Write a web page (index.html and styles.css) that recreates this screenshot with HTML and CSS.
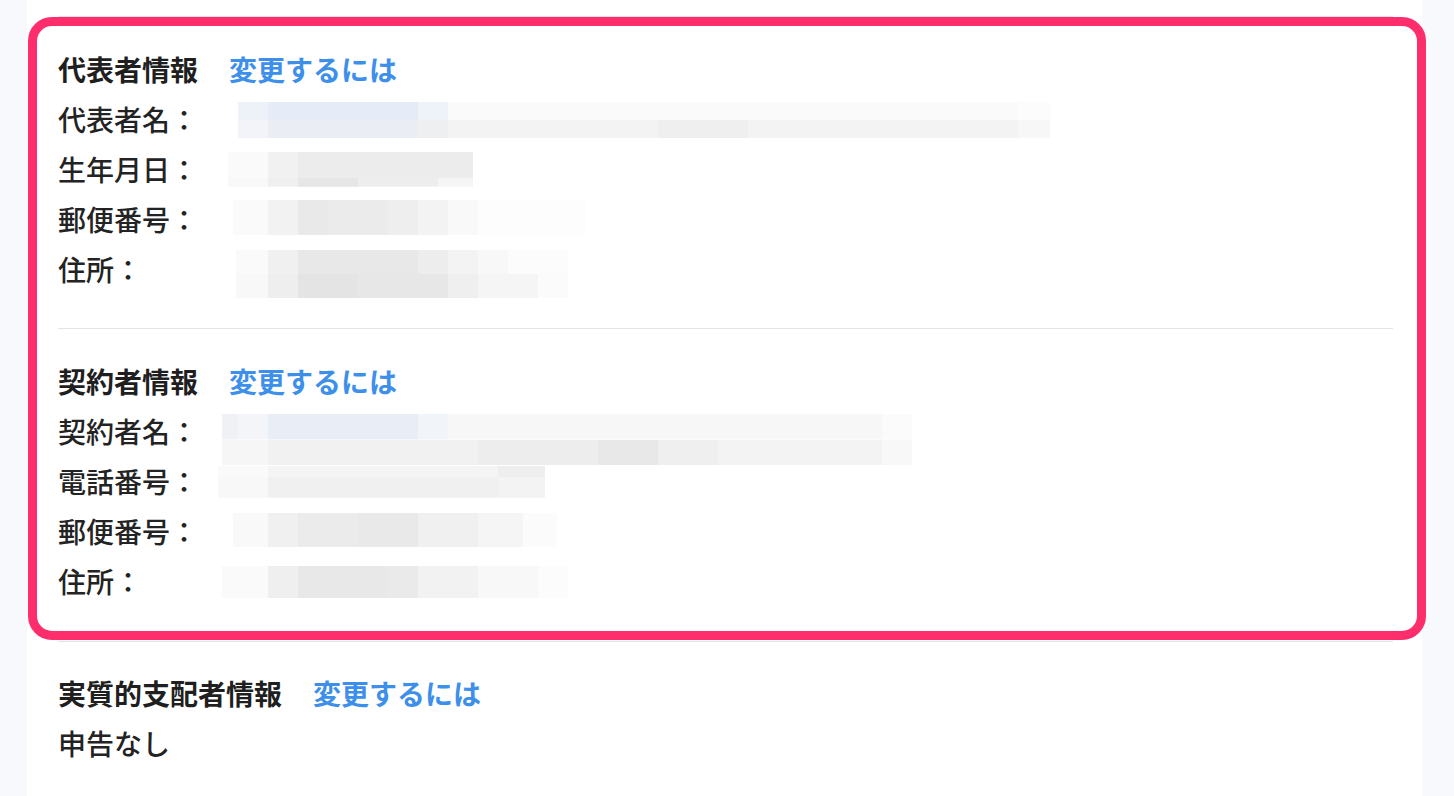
FILE: index.html
```html
<!DOCTYPE html>
<html lang="ja">
<head>
<meta charset="utf-8">
<title>登録情報</title>
<link rel="stylesheet" href="styles.css">
</head>
<body>
<div class="panel">
  <div class="divider top-divider"></div>
  <div class="highlight">
    <section class="info">
      <div class="heading"><span class="title">代表者情報</span><a class="link" href="#">変更するには</a></div>
      <div class="row"><span class="label">代表者名：</span><div class="mosaic m1"></div></div>
      <div class="row"><span class="label">生年月日：</span><div class="mosaic m2"></div></div>
      <div class="row"><span class="label">郵便番号：</span><div class="mosaic m3"></div></div>
      <div class="row"><span class="label">住所：</span><div class="mosaic m4"></div></div>
    </section>
    <div class="divider inner-divider"></div>
    <section class="info">
      <div class="heading"><span class="title">契約者情報</span><a class="link" href="#">変更するには</a></div>
      <div class="row"><span class="label">契約者名：</span><div class="mosaic m5"></div></div>
      <div class="row"><span class="label">電話番号：</span><div class="mosaic m6"></div></div>
      <div class="row"><span class="label">郵便番号：</span><div class="mosaic m7"></div></div>
      <div class="row"><span class="label">住所：</span><div class="mosaic m8"></div></div>
    </section>
  </div>
  <div class="divider bottom-divider"></div>
  <section class="info outside">
    <div class="heading"><span class="title">実質的支配者情報</span><a class="link" href="#">変更するには</a></div>
    <div class="plain">申告なし</div>
  </section>
</div>
</body>
</html>
```
FILE: styles.css
```css
html, body {
  margin: 0;
  padding: 0;
}
body {
  background: #f8f9fd;
  font-family: "Noto Sans CJK JP", "Noto Sans", sans-serif;
  color: #262626;
  font-size: 28px;
  line-height: 50px;
}
.panel {
  margin-left: 27px;
  width: 1395px;
  min-height: 796px;
  background: #ffffff;
  padding-top: 16px;
  box-sizing: border-box;
}
.divider {
  height: 1px;
  background: #e4e4e4;
}
.top-divider {
  margin: 0 29px 0 31px;
}
.highlight {
  margin-left: 1px;
  width: 1398px;
  box-sizing: border-box;
  border: 9px solid #fe2d6c;
  border-radius: 24px;
  padding: 18px 24px 25px 21px;
  background: #ffffff;
}
.inner-divider {
  margin: 34px 0 27px 0;
}
.bottom-divider {
  margin: 1px 29px 0 31px;
}
.heading {
  display: flex;
  align-items: center;
  height: 50px;
}
.title {
  font-weight: 700;
  color: #1f1f1f;
}
.link {
  margin-left: 31px;
  color: #3d8fe9;
  font-weight: 700;
  text-decoration: none;
}
.row {
  display: grid;
  grid-template-columns: 160px 1fr;
  height: 50px;
}
.label {
  color: #232323;
  font-weight: 500;
}
.mosaic {
  align-self: start;
  background-repeat: no-repeat;
}
.outside {
  padding: 26px 31px 0 31px;
}
.plain {
  color: #232323;
  font-weight: 500;
}

.m1 {
  margin: 8px 0 0 20px;
  width: 812px;
  height: 36px;
  background-image:
    linear-gradient(to right, #edf1f8 0 30px, #e5ecf8 30px 180px, #eef3fa 180px 210px, #fafafa 210px 780px, #fcfcfc 780px),
    linear-gradient(to right, #f2f4f9 0 30px, #eaedf4 30px 180px, #eeeff1 180px 210px, #f3f3f3 210px 420px, #efefef 420px 510px, #f3f3f3 510px 780px, #f7f7f7 780px);
  background-size: 100% 50%, 100% 50%;
  background-position: top, bottom;
}
.m2 {
  margin: 8px 0 0 10px;
  width: 245px;
  height: 35px;
  background-image:
    linear-gradient(to right, #fafafa 0 40px, #f1f1f1 40px 70px, #ececec 70px 245px),
    linear-gradient(to right, #f8f8f8 0 40px, #efefef 40px 70px, #e6e6e6 70px 130px, #ededed 130px 210px, #f5f5f5 210px);
  background-size: 100% 75%, 100% 25%;
  background-position: top, bottom;
}
.m3 {
  margin: 6px 0 0 15px;
  width: 352px;
  height: 35px;
  background-image:
    linear-gradient(to right, #fafafa 0 35px, #f2f2f2 35px 65px, #e9e9e9 65px 95px, #ebebeb 95px 155px, #eeeeee 155px 185px, #f3f3f3 185px 215px, #f9f9f9 215px 245px, #fdfdfd 245px);
}
.m4 {
  margin: 6px 0 0 18px;
  width: 332px;
  height: 48px;
  background-image:
    linear-gradient(to right, #fafafa 0 32px, #f0f0f0 32px 62px, #e8e8e8 62px 182px, #ededed 182px 212px, #f3f3f3 212px 242px, #f8f8f8 242px 272px, #fcfcfc 272px),
    linear-gradient(to right, #f8f8f8 0 32px, #eeeeee 32px 62px, #e4e4e4 62px 122px, #e7e7e7 122px 212px, #efefef 212px 242px, #f5f5f5 242px 302px, #fbfbfb 302px);
  background-size: 100% 50%, 100% 50%;
  background-position: top, bottom;
}
.m5 {
  margin: 8px 0 0 4px;
  width: 690px;
  height: 51px;
  background-image:
    linear-gradient(to right, #f0f1f4 0 16px, #f3f5f9 16px 46px, #e8edf6 46px 196px, #f1f4f9 196px 226px, #f7f7f7 226px 660px, #fbfbfb 660px),
    linear-gradient(to right, #f6f6f6 0 46px, #f1f1f1 46px 256px, #ededed 256px 376px, #e8e8e8 376px 436px, #efefef 436px 496px, #f3f3f3 496px 660px, #f8f8f8 660px);
  background-size: 100% 50%, 100% 50%;
  background-position: top, bottom;
}
.m6 {
  margin: 10px 0 0 0;
  width: 327px;
  height: 32px;
  background-image:
    linear-gradient(to right, #fafafa 0 50px, #f4f4f4 50px 280px, #eeeeee 280px),
    linear-gradient(to right, #f8f8f8 0 50px, #f0f0f0 50px 280px, #f3f3f3 280px);
  background-size: 100% 35%, 100% 65%;
  background-position: top, bottom;
}
.m7 {
  margin: 7px 0 0 15px;
  width: 324px;
  height: 34px;
  background-image:
    linear-gradient(to right, #f9f9f9 0 35px, #f0f0f0 35px 65px, #ebebeb 65px 125px, #e9e9e9 125px 185px, #f0f0f0 185px 245px, #f5f5f5 245px 290px, #fbfbfb 290px);
}
.m8 {
  margin: 10px 0 0 4px;
  width: 346px;
  height: 32px;
  background-image:
    linear-gradient(to right, #fafafa 0 46px, #efefef 46px 76px, #e8e8e8 76px 166px, #eaeaea 166px 196px, #f2f2f2 196px 256px, #f8f8f8 256px 316px, #fcfcfc 316px);
}
```
